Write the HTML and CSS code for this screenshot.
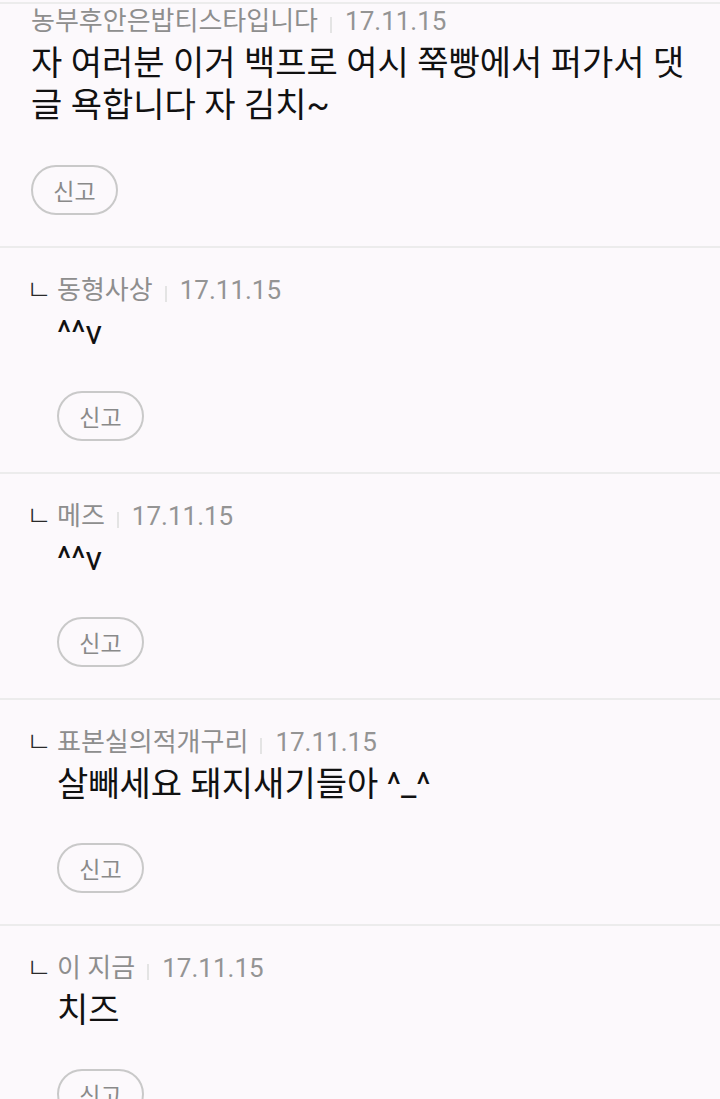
FILE: index.html
```html
<!DOCTYPE html>
<html lang="ko">
<head>
    <meta charset="UTF-8">
    <meta name="viewport" content="width=device-width, initial-scale=1.0">
    <title>댓글</title>
    <link rel="stylesheet" href="styles.css">
</head>
<body>
    <div class="top-edge"></div>
    <div class="comments">
        <div class="comment">
            <div class="head">
                <span class="name">농부후안은밥티스타입니다</span><span class="bar"></span><span class="date">17.11.15</span>
            </div>
            <div class="text">자 여러분 이거 백프로 여시 쭉빵에서 퍼가서 댓글 욕합니다 자 김치~</div>
            <button class="report">신고</button>
        </div>

        <div class="comment reply">
            <span class="mark">ㄴ</span>
            <div class="body">
                <div class="head">
                    <span class="name">동형사상</span><span class="bar"></span><span class="date">17.11.15</span>
                </div>
                <div class="text">^^v</div>
                <button class="report">신고</button>
            </div>
        </div>

        <div class="comment reply">
            <span class="mark">ㄴ</span>
            <div class="body">
                <div class="head">
                    <span class="name">메즈</span><span class="bar"></span><span class="date">17.11.15</span>
                </div>
                <div class="text">^^v</div>
                <button class="report">신고</button>
            </div>
        </div>

        <div class="comment reply">
            <span class="mark">ㄴ</span>
            <div class="body">
                <div class="head">
                    <span class="name">표본실의적개구리</span><span class="bar"></span><span class="date">17.11.15</span>
                </div>
                <div class="text">살빼세요 돼지새기들아 ^_^</div>
                <button class="report">신고</button>
            </div>
        </div>

        <div class="comment reply">
            <span class="mark">ㄴ</span>
            <div class="body">
                <div class="head">
                    <span class="name">이 지금</span><span class="bar"></span><span class="date">17.11.15</span>
                </div>
                <div class="text">치즈</div>
                <button class="report">신고</button>
            </div>
        </div>
    </div>
</body>
</html>
```

FILE: styles.css
```css
body {
    margin: 0;
    background-color: #fcf9fc;
    font-family: Roboto, "Noto Sans CJK KR", sans-serif;
    color: #111;
}
.top-edge {
    position: fixed;
    top: 2px;
    left: 0;
    right: 0;
    height: 2px;
    background-color: #ececec;
}
.comment {
    padding: 0 30px 31px 31px;
    border-bottom: 2px solid #ececec;
}
.comment.reply {
    display: flex;
    padding-top: 21px;
}
.mark {
    width: 31px;
    flex-shrink: 0;
    margin-left: -5px;
    margin-top: -2px;
    font-family: "Noto Sans CJK KR", sans-serif;
    font-size: 28px;
    line-height: 42px;
    height: 42px;
    color: #2a2a2a;
    font-weight: 300;
}
.body {
    flex: 1;
}
.head {
    font-size: 26px;
    line-height: 42px;
    color: #8e8e8e;
    white-space: nowrap;
}
.bar {
    display: inline-block;
    width: 2px;
    height: 16px;
    margin: 0 13px 0 12px;
    background-color: #e4e4e4;
    vertical-align: -3px;
}
.date {
    color: #949494;
}
.text {
    font-size: 34px;
    line-height: 42px;
    color: #111;
}
.report {
    display: block;
    margin-top: 39px;
    width: 87px;
    height: 50px;
    padding: 0;
    border: 2px solid #c9c9c9;
    border-radius: 25px;
    background: transparent;
    font-family: "Noto Sans CJK KR", sans-serif;
    font-size: 23px;
    color: #8a8a8a;
}
.reply .report {
    margin-top: 38px;
}
```
